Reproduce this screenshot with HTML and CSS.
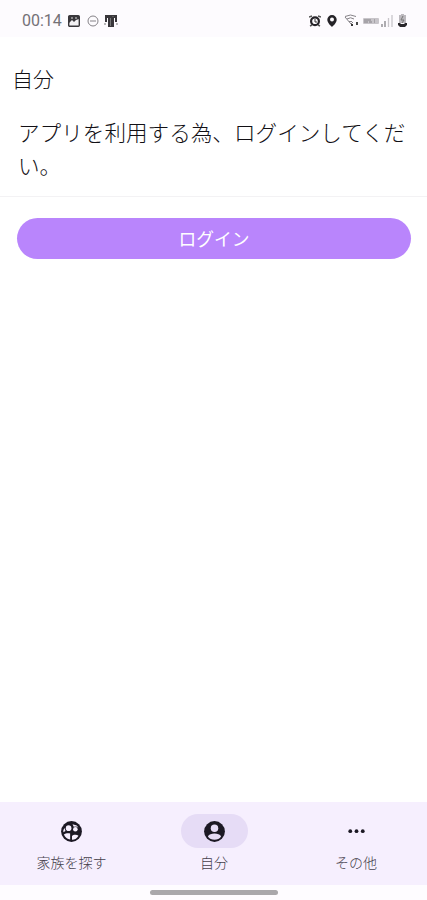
FILE: index.html
```html
<!DOCTYPE html>
<html lang="ja">
<head>
<meta charset="utf-8">
<title>自分</title>
<link rel="stylesheet" href="styles.css">
</head>
<body>
<header class="status">
  <span class="time">00:14</span>
  <svg class="s-photo" width="12" height="12" viewBox="0 0 12 12"><rect x=".7" y=".7" width="10.600" height="10.600" rx="1" fill="#f3f1f4" stroke="#39373b" stroke-width="1.400"/><path d="M1 1h10v3L8 5 6 7 4 5 1 8z" fill="#39373b"/><path d="M3 3h2M7 3h2" stroke="#ddd"/></svg>
  <svg class="s-dnd" width="12" height="12" viewBox="0 0 12 12" fill="none" stroke="#858287"><circle cx="6" cy="6" r="5"/><path d="M3 6h6"/></svg>
  <svg class="s-app" width="14" height="14" viewBox="0 0 14 14"><path d="M1 1h12v7h-2V4h-1v9H4V4H3v4H1z" fill="#39373b"/><path d="M6.500 4v8M9 2v1" stroke="#777"/><path d="M0 10h2M12 10h2" stroke="#777"/></svg>
  <span class="spacer"></span>
  <svg class="s-alarm" width="12" height="12" viewBox="0 0 12 12"><path d="M0 2l3-1M9 1l3 1M1 11l2-1M11 11l-2-1" stroke="#555" stroke-width="1.400"/><circle cx="6" cy="6.300" r="3.900" fill="none" stroke="#252328" stroke-width="2.200"/><path d="M6 4v3h2" fill="none" stroke="#333"/></svg>
  <svg class="s-pin" width="10" height="12" viewBox="0 0 10 12"><path d="M5 0a4.700 4.700 0 0 0-4.700 4.700C.3 8 5 12 5 12s4.700-4 4.700-7.300A4.700 4.700 0 0 0 5 0z" fill="#252328"/><circle cx="5" cy="4.600" r="2" fill="#fdfbfe"/></svg>
  <svg class="s-wifi" width="16" height="13" viewBox="0 0 16 13" fill="none" stroke="#858287"><path d="M1 2.500q5.500-3 11 0M3 5q3.500-2.500 7 0M5 7.500h3M1 3l6 7 2-2"/><path d="M7 11h2M13 8v3" stroke="#333" stroke-width="1.800"/></svg>
  <svg class="s-net" width="16" height="8" viewBox="0 0 16 8"><rect y="1" width="16" height="6" rx="1" fill="#c8c5ca"/><path d="M1 3h7M1 5h4M6 5h3M11 3h1M11 5h1" stroke="#858287"/></svg>
  <svg class="s-signal" width="12" height="12" viewBox="0 0 12 12"><path d="M1 9v3M4 6v6" stroke="#858287" stroke-width="1.300"/><path d="M7.500 3v9M11 0v12" stroke="#c8c5ca" stroke-width="1.300"/></svg>
  <svg class="s-battery" width="9" height="13" viewBox="0 0 9 13"><path d="M3 0h3v1h2v8H1V1h2z" fill="#bcb9be"/><path d="M5 2L3 6h3L4 9" fill="none" stroke="#777"/><path d="M0 9h2l1 1h3l1-1h2v2l-2 2H2l-2-2z" fill="#29272b"/></svg>
</header>
<main class="content">
  <h1 class="title">自分</h1>
  <p class="message">アプリを利用する為、ログインしてくだい。</p>
  <div class="action"><button class="login">ログイン</button></div>
</main>
<nav class="tabs">
  <a class="tab"><span class="pill"><svg width="25" height="25" viewBox="0 0 24 24"><circle cx="12" cy="12" r="10"/><g class="gap"><circle cx="9.200" cy="8.800" r="2.700"/><circle cx="15.700" cy="9.800" r="2.200"/><path d="M4.200 12.600v-2.100l1.200-1.800.8 2.700zM13 5l4 1.300 1.700 2-2-1.100-2.600.3z"/><path d="M4.700 14.800c1.400-1.100 3.700-1.300 6-1v5.900c-2.700-.4-4.800-2.200-6-4.900z"/><path d="M12.500 16.300c.8-1.300 4.400-1.900 6.200-.3-1.100 2.200-3.400 3.900-6.200 4z"/></g></svg></span><span class="label">家族を探す</span></a>
  <a class="tab"><span class="pill active"><svg width="25" height="25" viewBox="0 0 24 24"><circle cx="12" cy="12" r="10"/><circle class="cut" cx="12" cy="8.900" r="3.600"/><path class="cut" d="M5.700 16.800c.8-2 3.600-2.800 6.300-2.800s5.500.8 6.300 2.800C17 18.900 14.600 20 12 20s-5-1.100-6.300-3.200z"/></svg></span><span class="label">自分</span></a>
  <a class="tab"><span class="pill"><svg width="25" height="25" viewBox="0 0 24 24"><circle cx="6" cy="11.700" r="1.800"/><circle cx="12" cy="11.700" r="1.800"/><circle cx="18" cy="11.700" r="1.800"/></svg></span><span class="label">その他</span></a>
</nav>
<footer class="gesture"><span class="handle"></span></footer>
</body>
</html>
```
FILE: styles.css
```css
* { box-sizing: border-box; }
body {
  margin: 0;
  height: 900px;
  display: flex;
  flex-direction: column;
  overflow: hidden;
  background: #fff;
  color: #121015;
  font-family: "Noto Sans CJK JP", sans-serif;
  font-weight: 300;
}
.status {
  height: 37px;
  padding: 4px 20px 0 22px;
  display: flex;
  align-items: center;
  background: #fdfbfe;
}
.status svg { flex: none; }
.time { width: 46px; font: 16px/20px Roboto, sans-serif; color: #747177; }
.s-dnd { margin-left: 7px; }
.s-app { margin-left: 5px; }
.spacer { flex: 1; }
.s-pin { margin-left: 6px; }
.s-wifi { margin-left: 7px; }
.s-net { margin-left: 3px; }
.s-signal { margin-left: 2px; }
.s-battery { margin-left: 5px; }
.content { flex: 1; }
.title {
  margin: 0;
  padding: 25px 12px 0;
  font-size: 21px;
  line-height: 33px;
  font-weight: 300;
}
.message {
  margin: 0;
  height: 102px;
  padding: 20px 18px 0;
  border-bottom: 1px solid #f3f2f4;
  font-size: 21.6px;
  line-height: 33px;
}
.action { padding: 21px 16px 0 17px; }
.login {
  display: block;
  width: 100%;
  height: 41px;
  padding: 0;
  border: 0;
  border-radius: 21px;
  background: #b985fc;
  color: #fff;
  font: 17.8px/41px "Noto Sans CJK JP", sans-serif;
}
.tabs {
  height: 83px;
  padding-top: 12px;
  display: grid;
  grid-template-columns: 143px 142px 142px;
  background: #f6effe;
}
.tab { display: flex; flex-direction: column; align-items: center; }
.pill {
  width: 67px;
  height: 34px;
  border-radius: 17px;
  display: grid;
  place-items: center;
  fill: #1c1924;
}
.active { background: #e6dcf6; }
.cut { fill: #e6dcf6; }
.gap { fill: #f6effe; }
.label { margin-top: 4px; font-size: 14px; line-height: 20px; color: #45404b; }
.gesture { height: 15px; padding-top: 5px; display: flex; justify-content: center; background: #fefcff; }
.handle { width: 128px; height: 5px; border-radius: 3px; background: #aaa8ab; }
```
